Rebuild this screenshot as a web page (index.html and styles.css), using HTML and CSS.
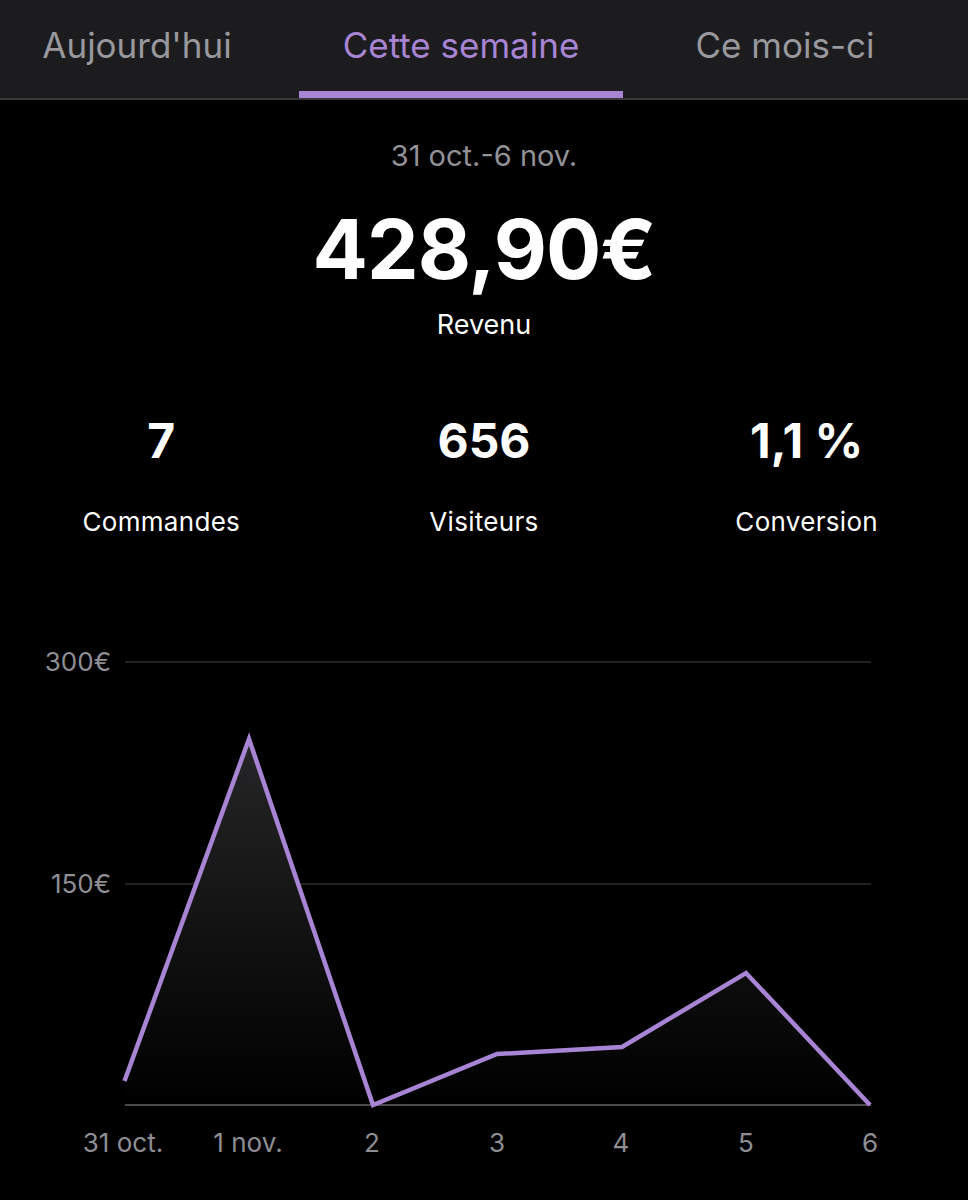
FILE: index.html
```html
<!DOCTYPE html>
<html lang="fr">
<head>
    <meta charset="UTF-8">
    <meta name="viewport" content="width=device-width, initial-scale=1.0">
    <title>Statistiques</title>
    <link rel="stylesheet" href="styles.css">
</head>
<body>
    <!-- Period tabs -->
    <nav class="tabs">
        <div class="tab">Aujourd'hui</div>
        <div class="tab active">Cette semaine</div>
        <div class="tab">Ce mois-ci</div>
    </nav>

    <!-- Revenue summary -->
    <section class="summary">
        <p class="period">31 oct.-6 nov.</p>
        <p class="revenue">428,90€</p>
        <p class="revenue-label">Revenu</p>
    </section>

    <!-- Key figures -->
    <section class="stats">
        <div class="stat">
            <span class="stat-value">7</span>
            <span class="stat-label">Commandes</span>
        </div>
        <div class="stat">
            <span class="stat-value">656</span>
            <span class="stat-label">Visiteurs</span>
        </div>
        <div class="stat">
            <span class="stat-value">1,1 %</span>
            <span class="stat-label">Conversion</span>
        </div>
    </section>

    <!-- Revenue chart -->
    <section class="chart">
        <svg width="968" height="540" viewBox="0 0 968 540">
            <defs>
                <linearGradient id="area" x1="0" y1="0" x2="0" y2="1">
                    <stop offset="0" stop-color="#262628"/>
                    <stop offset="1" stop-color="#000"/>
                </linearGradient>
            </defs>
            <line class="grid" x1="125" y1="21" x2="871" y2="21"/>
            <line class="grid" x1="125" y1="243" x2="871" y2="243"/>
            <text class="y-label" x="111" y="30">300€</text>
            <text class="y-label" x="111" y="252">150€</text>

            <polygon fill="url(#area)" points="124.5,440 249,98 373,464 497,413 622,406 746,332 870,464 870,464 124.5,464"/>
            <line class="axis" x1="125" y1="464" x2="871" y2="464"/>
            <polyline class="line" points="124.5,440 249,98 373,464 497,413 622,406 746,332 870,464"/>

            <text class="x-label" x="123" y="511">31 oct.</text>
            <text class="x-label" x="248" y="511">1 nov.</text>
            <text class="x-label" x="372" y="511">2</text>
            <text class="x-label" x="497" y="511">3</text>
            <text class="x-label" x="621" y="511">4</text>
            <text class="x-label" x="746" y="511">5</text>
            <text class="x-label" x="870" y="511">6</text>
        </svg>
    </section>
</body>
</html>
```

FILE: styles.css
```css
body {
    margin: 0;
    background-color: #000;
    color: #fff;
    font-family: Inter, "Noto Sans", sans-serif;
}

p {
    margin: 0;
}

/* Tab bar at the top */
.tabs {
    display: grid;
    grid-template-columns: 324px 324px 324px;
    margin-left: -25px;
    height: 98px;
    background-color: #1c1c1e;
    border-bottom: 2px solid #38383a;
}

.tab {
    display: flex;
    align-items: center;
    justify-content: center;
    padding-bottom: 2px;
    font-size: 35px;
    color: #98989d;
    border-bottom: 7px solid transparent;
}

.tab.active {
    color: #a884d4;
    border-bottom-color: #a884d4;
}

/* Date range and total revenue */
.summary {
    text-align: center;
    padding-top: 39px;
}

.period {
    font-size: 29px;
    line-height: 34px;
    color: #929297;
}

.revenue {
    margin-top: 32px;
    font-size: 82px;
    line-height: 90px;
    font-weight: 700;
    letter-spacing: -1px;
}

.revenue-label {
    margin-top: 13px;
    font-size: 27px;
    line-height: 34px;
}

/* Three key figures */
.stats {
    display: grid;
    grid-template-columns: 1fr 1fr 1fr;
    margin-top: 70px;
}

.stat {
    display: flex;
    flex-direction: column;
    align-items: center;
}

.stat-value {
    font-size: 48px;
    line-height: 58px;
    font-weight: 700;
}

.stat-label {
    margin-top: 36px;
    font-size: 26px;
    line-height: 32px;
    letter-spacing: 0.3px;
}

/* Line chart */
.chart {
    margin-top: 103px;
}

.chart svg {
    display: block;
}

.grid {
    stroke: #2e2e30;
    stroke-width: 1.5;
}

.axis {
    stroke: #4a4a4d;
    stroke-width: 2;
}

.line {
    fill: none;
    stroke: #a884d4;
    stroke-width: 4.5;
    stroke-linejoin: miter;
}

.y-label,
.x-label {
    font-family: Inter, "Noto Sans", sans-serif;
    font-size: 26px;
    fill: #8e8e93;
}

.y-label {
    text-anchor: end;
}

.x-label {
    text-anchor: middle;
}
```
